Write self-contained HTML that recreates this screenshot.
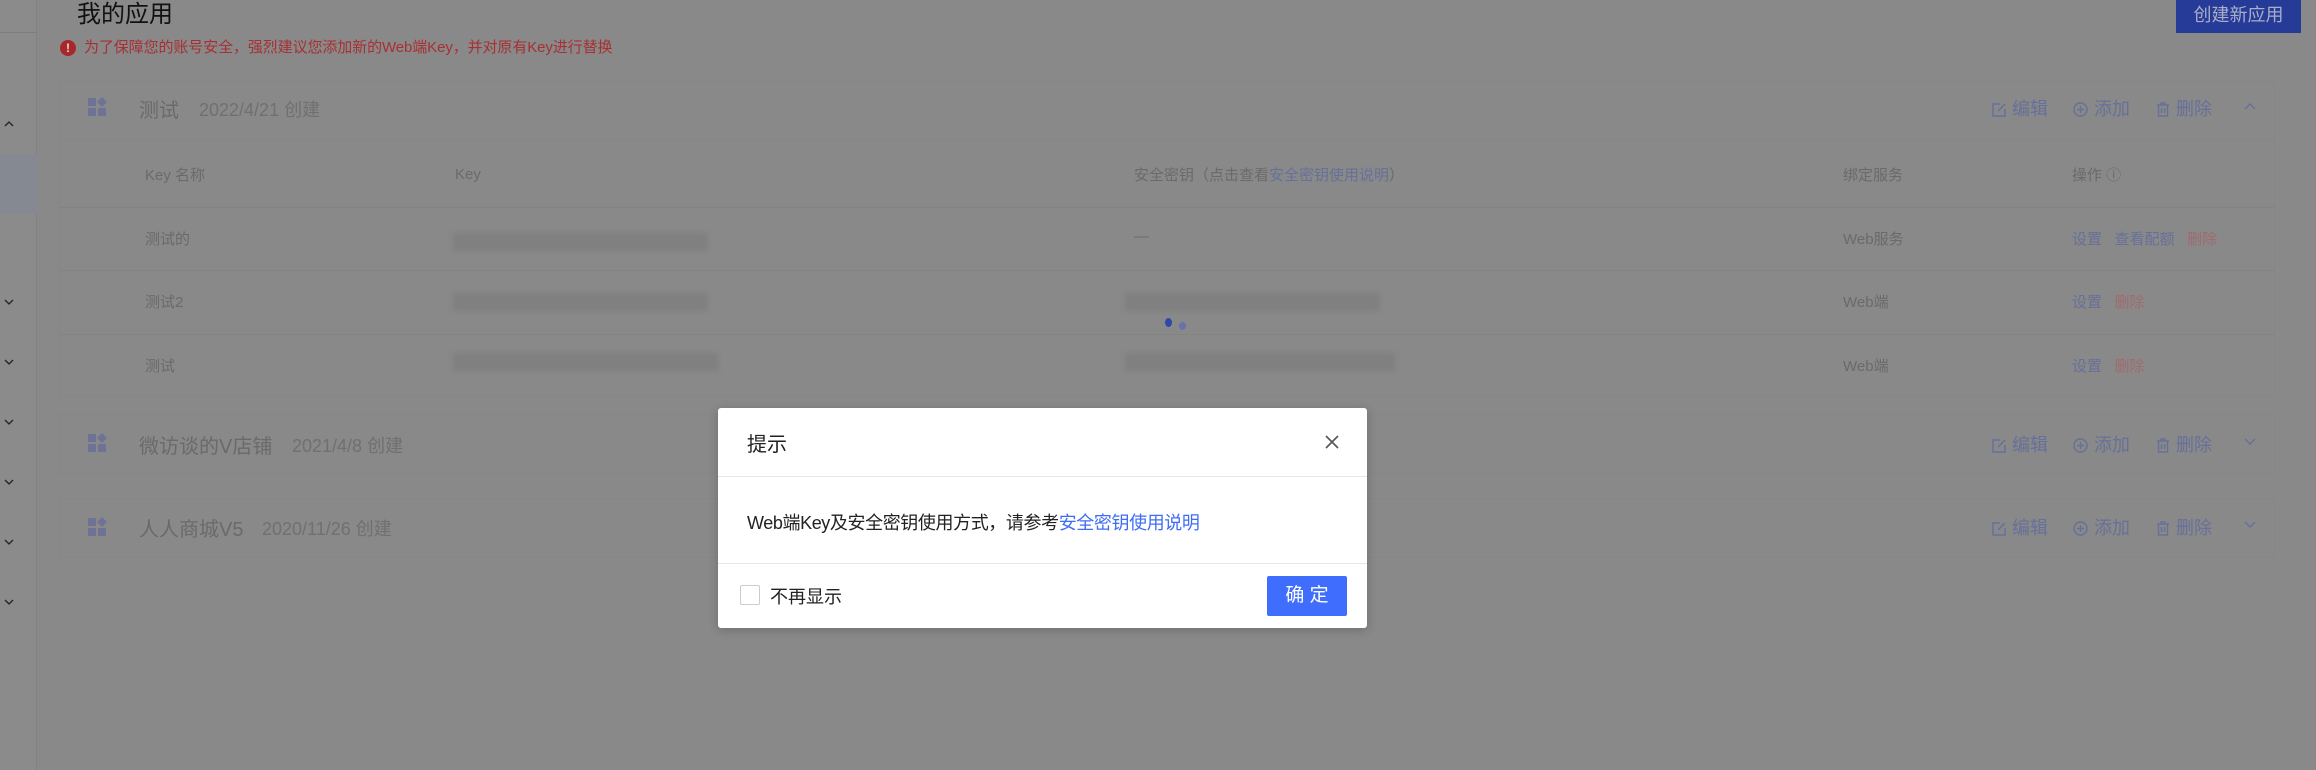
<!DOCTYPE html>
<html><head><meta charset="utf-8"><style>
*{margin:0;padding:0;box-sizing:border-box}
body{width:2316px;height:770px;overflow:hidden;background:#888988;font-family:"Liberation Sans","Noto Sans CJK SC",sans-serif;position:relative}
.a{position:absolute;white-space:nowrap}
.side{left:0;top:0;width:37px;height:770px;background:#8b8b8b;border-right:1px solid #828282}
.lnk{color:#67709a}
.g{color:#6a6a6a}
.row{position:absolute;left:59px;width:2216px;height:1px;background:#828382}
.blur{position:absolute;height:18px;background:#7f807f;filter:blur(2px)}
.act{font-size:18px;color:#67709a}
.act svg{vertical-align:-2px;margin-right:6px}
</style></head><body>
<div class="a side"></div>
<div class="a" style="left:0;top:32px;width:37px;height:1px;background:#7e7e7e"></div>
<div class="a" style="left:0;top:154px;width:37px;height:60px;background:#858992"></div>
<svg class="a" style="left:4px;top:120px" width="10" height="8"><path d="M1 6L5 2L9 6" stroke="#222" stroke-width="1.3" fill="none"/></svg>
<svg class="a" style="left:4px;top:298px" width="10" height="8"><path d="M1 2L5 6L9 2" stroke="#222" stroke-width="1.3" fill="none"/></svg>
<svg class="a" style="left:4px;top:358px" width="10" height="8"><path d="M1 2L5 6L9 2" stroke="#222" stroke-width="1.3" fill="none"/></svg>
<svg class="a" style="left:4px;top:418px" width="10" height="8"><path d="M1 2L5 6L9 2" stroke="#222" stroke-width="1.3" fill="none"/></svg>
<svg class="a" style="left:4px;top:478px" width="10" height="8"><path d="M1 2L5 6L9 2" stroke="#222" stroke-width="1.3" fill="none"/></svg>
<svg class="a" style="left:4px;top:538px" width="10" height="8"><path d="M1 2L5 6L9 2" stroke="#222" stroke-width="1.3" fill="none"/></svg>
<svg class="a" style="left:4px;top:598px" width="10" height="8"><path d="M1 2L5 6L9 2" stroke="#222" stroke-width="1.3" fill="none"/></svg>

<div class="a" style="left:77px;top:0px;font-size:24px;color:#111;line-height:30px">我的应用</div>
<div class="a" style="left:60px;top:40px;width:16px;height:16px;border-radius:50%;background:#a8272a;color:#ddd;font-size:12px;font-weight:bold;text-align:center;line-height:16px">!</div>
<div class="a" style="left:84px;top:38px;font-size:15px;color:#a83034;line-height:20px;letter-spacing:-0.1px">为了保障您的账号安全，强烈建议您添加新的Web端Key，并对原有Key进行替换</div>
<div class="a" style="left:2176px;top:0;width:125px;height:33px;background:#263a97;color:#a9aec8;font-size:18px;text-align:center;line-height:30px">创建新应用</div>

<!-- card1 -->
<div class="a" style="left:59px;top:81px;width:2216px;height:316px;border:1px solid #858685"></div>
<div class="a" style="left:60px;top:140px;width:2214px;height:1px;background:#858685"></div>
<svg class="a" style="left:88px;top:97px" width="20" height="20"><rect x="0" y="1" width="8" height="8" fill="#6e7396"/><rect x="0" y="11" width="8" height="8" fill="#6e7396"/><rect x="10" y="11" width="8" height="8" fill="#6e7396"/><rect x="10.5" y="1.5" width="7" height="7" fill="#6e7396" transform="rotate(45 14 5)"/></svg>
<div class="a g" style="left:139px;top:94px;font-size:20px">测试</div>
<div class="a g" style="left:199px;top:96px;font-size:18px;color:#707070">2022/4/21 创建</div>

<!-- actions -->
<div class="a act" style="left:1992px;top:95px"><svg width="14" height="14"><path d="M8 1H1V13H13V6M6 8L13 1" stroke="#67709a" stroke-width="1.5" fill="none"/></svg>编辑</div>
<div class="a act" style="left:2073px;top:95px"><svg width="15" height="15"><circle cx="7.5" cy="7.5" r="6.5" stroke="#67709a" stroke-width="1.4" fill="none"/><path d="M7.5 4V11M4 7.5H11" stroke="#67709a" stroke-width="1.4"/></svg>添加</div>
<div class="a act" style="left:2156px;top:95px"><svg width="14" height="15"><path d="M1 3H13M5 3V1H9V3M2.5 3V14H11.5V3M5.5 6V11M8.5 6V11" stroke="#67709a" stroke-width="1.4" fill="none"/></svg>删除</div>
<svg class="a" style="left:2244px;top:102px" width="12" height="8"><path d="M1 7L6 2L11 7" stroke="#67709a" stroke-width="1.4" fill="none"/></svg>

<div class="a act" style="left:1992px;top:431px"><svg width="14" height="14"><path d="M8 1H1V13H13V6M6 8L13 1" stroke="#67709a" stroke-width="1.5" fill="none"/></svg>编辑</div>
<div class="a act" style="left:2073px;top:431px"><svg width="15" height="15"><circle cx="7.5" cy="7.5" r="6.5" stroke="#67709a" stroke-width="1.4" fill="none"/><path d="M7.5 4V11M4 7.5H11" stroke="#67709a" stroke-width="1.4"/></svg>添加</div>
<div class="a act" style="left:2156px;top:431px"><svg width="14" height="15"><path d="M1 3H13M5 3V1H9V3M2.5 3V14H11.5V3M5.5 6V11M8.5 6V11" stroke="#67709a" stroke-width="1.4" fill="none"/></svg>删除</div>
<svg class="a" style="left:2244px;top:438px" width="12" height="8"><path d="M1 1L6 6L11 1" stroke="#67709a" stroke-width="1.4" fill="none"/></svg>

<div class="a act" style="left:1992px;top:514px"><svg width="14" height="14"><path d="M8 1H1V13H13V6M6 8L13 1" stroke="#67709a" stroke-width="1.5" fill="none"/></svg>编辑</div>
<div class="a act" style="left:2073px;top:514px"><svg width="15" height="15"><circle cx="7.5" cy="7.5" r="6.5" stroke="#67709a" stroke-width="1.4" fill="none"/><path d="M7.5 4V11M4 7.5H11" stroke="#67709a" stroke-width="1.4"/></svg>添加</div>
<div class="a act" style="left:2156px;top:514px"><svg width="14" height="15"><path d="M1 3H13M5 3V1H9V3M2.5 3V14H11.5V3M5.5 6V11M8.5 6V11" stroke="#67709a" stroke-width="1.4" fill="none"/></svg>删除</div>
<svg class="a" style="left:2244px;top:521px" width="12" height="8"><path d="M1 1L6 6L11 1" stroke="#67709a" stroke-width="1.4" fill="none"/></svg>

<div class="a g" style="left:145px;top:164px;font-size:15px">Key 名称</div>
<div class="a g" style="left:455px;top:166px;font-size:15px">Key</div>
<div class="a g" style="left:1134px;top:164px;font-size:15px">安全密钥（点击查看<span class="lnk">安全密钥使用说明</span>）</div>
<div class="a g" style="left:1843px;top:164px;font-size:15px">绑定服务</div>
<div class="a g" style="left:2072px;top:164px;font-size:15px">操作 ⓘ</div>
<div class="row" style="top:207px"></div>
<div class="row" style="top:270px"></div>
<div class="row" style="top:334px"></div>

<div class="a g" style="left:145px;top:228px;font-size:15px">测试的</div>
<div class="blur" style="left:453px;top:233px;width:255px"></div>
<div class="a g" style="left:1134px;top:228px;font-size:15px">—</div>
<div class="a g" style="left:1843px;top:228px;font-size:15px">Web服务</div>
<div class="a" style="left:2072px;top:228px;font-size:15px"><span class="lnk">设置</span>&nbsp;&nbsp;&nbsp;<span class="lnk">查看配额</span>&nbsp;&nbsp;&nbsp;<span style="color:#a06a70">删除</span></div>

<div class="a g" style="left:145px;top:291px;font-size:15px">测试2</div>
<div class="blur" style="left:453px;top:293px;width:255px"></div>
<div class="blur" style="left:1125px;top:293px;width:255px"></div>
<div class="a" style="left:1165px;top:318px;width:7px;height:9px;border-radius:50%;background:#2e47a8"></div>
<div class="a" style="left:1179px;top:322px;width:7px;height:8px;border-radius:50%;background:#6873a8"></div>
<div class="a g" style="left:1843px;top:291px;font-size:15px">Web端</div>
<div class="a" style="left:2072px;top:291px;font-size:15px"><span class="lnk">设置</span>&nbsp;&nbsp;&nbsp;<span style="color:#a06a70">删除</span></div>

<div class="a g" style="left:145px;top:355px;font-size:15px">测试</div>
<div class="blur" style="left:453px;top:353px;width:265px"></div>
<div class="blur" style="left:1125px;top:353px;width:270px"></div>
<div class="a g" style="left:1843px;top:355px;font-size:15px">Web端</div>
<div class="a" style="left:2072px;top:355px;font-size:15px"><span class="lnk">设置</span>&nbsp;&nbsp;&nbsp;<span style="color:#a06a70">删除</span></div>

<!-- card2 -->
<div class="a" style="left:59px;top:414px;width:2216px;height:60px;border:1px solid #858685"></div>
<svg class="a" style="left:88px;top:433px" width="20" height="20"><rect x="0" y="1" width="8" height="8" fill="#6e7396"/><rect x="0" y="11" width="8" height="8" fill="#6e7396"/><rect x="10" y="11" width="8" height="8" fill="#6e7396"/><rect x="10.5" y="1.5" width="7" height="7" fill="#6e7396" transform="rotate(45 14 5)"/></svg>
<div class="a g" style="left:139px;top:430px;font-size:20px">微访谈的V店铺</div>
<div class="a" style="left:292px;top:432px;font-size:18px;color:#707070">2021/4/8 创建</div>
<!-- card3 -->
<div class="a" style="left:59px;top:498px;width:2216px;height:60px;border:1px solid #858685"></div>
<svg class="a" style="left:88px;top:517px" width="20" height="20"><rect x="0" y="1" width="8" height="8" fill="#6e7396"/><rect x="0" y="11" width="8" height="8" fill="#6e7396"/><rect x="10" y="11" width="8" height="8" fill="#6e7396"/><rect x="10.5" y="1.5" width="7" height="7" fill="#6e7396" transform="rotate(45 14 5)"/></svg>
<div class="a g" style="left:139px;top:513px;font-size:20px">人人商城V5</div>
<div class="a" style="left:262px;top:515px;font-size:18px;color:#707070">2020/11/26 创建</div>

<!-- dialog -->
<div class="a" style="left:718px;top:408px;width:649px;height:220px;background:#fff;border-radius:3px;box-shadow:0 2px 10px rgba(0,0,0,.2)">
 <div class="a" style="left:29px;top:20px;font-size:20px;color:#222">提示</div>
 <svg class="a" style="left:606px;top:26px" width="16" height="16"><path d="M2 2L14 14M14 2L2 14" stroke="#555" stroke-width="1.6"/></svg>
 <div class="a" style="left:0;top:68px;width:649px;height:1px;background:#e6e6e6"></div>
 <div class="a" style="left:29px;top:101px;font-size:18px;color:#222;letter-spacing:-0.4px">Web端Key及安全密钥使用方式，请参考<span style="color:#3f6cf5">安全密钥使用说明</span></div>
 <div class="a" style="left:0;top:155px;width:649px;height:1px;background:#e6e6e6"></div>
 <div class="a" style="left:22px;top:177px;width:20px;height:20px;border:1px solid #ccc;border-radius:2px"></div>
 <div class="a" style="left:52px;top:175px;font-size:18px;color:#222">不再显示</div>
 <div class="a" style="left:549px;top:168px;width:80px;height:40px;background:#3f6eff;border-radius:2px;color:#fff;font-size:19px;text-align:center;line-height:40px">确 定</div>
</div>
</body></html>
